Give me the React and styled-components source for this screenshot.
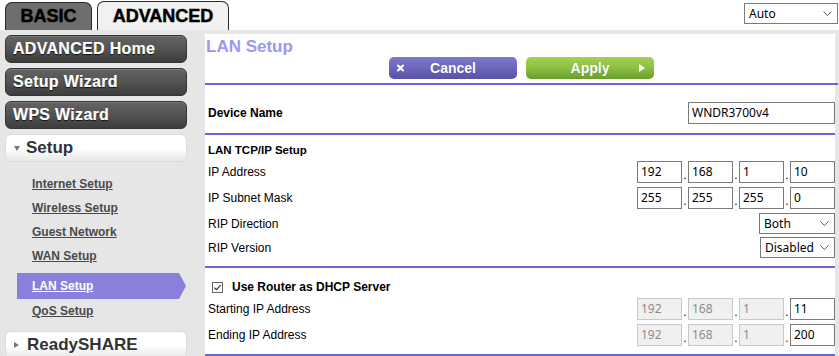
import React from 'react';
import styled, { createGlobalStyle } from 'styled-components';

const GlobalStyle = createGlobalStyle`
  html, body {
    margin: 0;
    padding: 0;
    background: #ffffff;
  }
  body {
    width: 839px;
    height: 356px;
    overflow: hidden;
    font-family: "Liberation Sans", Arial, sans-serif;
  }
`;

const fieldFont = `"Noto Sans", "Liberation Sans", Arial, sans-serif`;

const Page = styled.div`
  display: flex;
  flex-direction: column;
  width: 839px;
  height: 356px;
`;

const Header = styled.div`
  height: 30px;
  flex-shrink: 0;
  display: flex;
  justify-content: space-between;
  padding-left: 5px;
  box-sizing: border-box;
`;

const Tabs = styled.div`
  display: flex;
  align-items: flex-end;
  gap: 5px;
`;

const Tab = styled.div`
  box-sizing: border-box;
  width: ${(p) => p.$width}px;
  height: ${(p) => (p.$active ? 29 : 28)}px;
  display: flex;
  align-items: center;
  justify-content: center;
  border: 1px solid #2a2a2a;
  border-bottom: none;
  border-radius: 7px 7px 0 0;
  background: ${(p) => (p.$active ? '#f1f1f1' : '#6e6e6e')};
  color: #000;
  font-size: 18px;
  font-weight: bold;
  -webkit-text-stroke: 0.5px #000;
`;

const SelectBox = styled.div`
  box-sizing: border-box;
  width: ${(p) => p.$width}px;
  height: 21px;
  display: flex;
  align-items: center;
  justify-content: space-between;
  padding: 0 5px 0 4px;
  border: 1px solid #7a7a7a;
  background: #fff;
  font-family: ${fieldFont};
  font-size: 12px;
  color: #000;
  margin-top: ${(p) => p.$top || 0}px;
  margin-right: ${(p) => p.$right || 0}px;
`;

const Main = styled.div`
  flex: 1;
  display: flex;
  align-items: flex-start;
  background: #e6e6e6;
`;

const Sidebar = styled.div`
  width: 205px;
  flex-shrink: 0;
  box-sizing: border-box;
  padding: 5px 0 0 5px;
  display: flex;
  flex-direction: column;
`;

const NavButton = styled.div`
  box-sizing: border-box;
  width: 182px;
  height: 28px;
  margin-bottom: 5px;
  padding-left: 7px;
  display: flex;
  align-items: center;
  border-radius: 6px;
  border: 1px solid #353535;
  background: linear-gradient(#636363 0%, #555 45%, #3d3d3d 100%);
  box-shadow: inset 0 1px 0 #7a7a7a;
  color: #fff;
  font-size: 16px;
  font-weight: bold;
  letter-spacing: 0.3px;
  -webkit-text-stroke: 0.2px #fff;
  text-shadow: 0 1px 1px #111;
`;

const SectionButton = styled.div`
  box-sizing: border-box;
  width: 182px;
  height: 28px;
  margin-top: ${(p) => p.$top || 0}px;
  padding-left: 8px;
  display: flex;
  align-items: center;
  gap: 6px;
  border-radius: 6px;
  border: 1px solid #dcdcdc;
  background: linear-gradient(#ffffff 0%, #ffffff 50%, #e8e8e8 100%);
  color: #333;
  font-size: 17px;
  font-weight: bold;
`;

const Caret = styled.span`
  width: 0;
  height: 0;
  ${(p) =>
    p.$open
      ? `border-left: 3.5px solid transparent;
         border-right: 3.5px solid transparent;
         border-top: 5px solid #777;`
      : `border-top: 3.5px solid transparent;
         border-bottom: 3.5px solid transparent;
         border-left: 5px solid #777;
         margin-right: 2px;`}
`;

const SubMenu = styled.div`
  display: flex;
  flex-direction: column;
  padding-top: 10px;
`;

const SubLink = styled.a`
  display: block;
  height: 24px;
  line-height: 24px;
  padding-left: 27px;
  color: #4a4a4a;
  font-size: 12px;
  font-weight: bold;
  text-decoration: underline;
`;

const ActiveLink = styled.a`
  display: block;
  box-sizing: border-box;
  width: 169px;
  height: 26px;
  line-height: 26px;
  margin: 5px 0 0 12px;
  padding-left: 15px;
  background: #8880da;
  clip-path: polygon(0 0, calc(100% - 7px) 0, 100% 50%, calc(100% - 7px) 100%, 0 100%);
  color: #fff;
  font-size: 12px;
  font-weight: bold;
  text-decoration: underline;
`;

const Panel = styled.div`
  width: 630px;
  flex-shrink: 0;
  margin-top: 4px;
  background: #fff;
  display: flex;
  flex-direction: column;

  & > * {
    flex-shrink: 0;
  }
`;

const Title = styled.div`
  height: 21px;
  line-height: 21px;
  padding: 2px 0 0 1px;
  color: #9d97f3;
  font-size: 17px;
  font-weight: bold;
`;

const ButtonRow = styled.div`
  display: flex;
  justify-content: center;
  gap: 9px;
  padding-left: 3px;
`;

const ActionButton = styled.div`
  position: relative;
  box-sizing: border-box;
  width: 128px;
  height: 22px;
  display: flex;
  align-items: center;
  justify-content: center;
  border-radius: 5px;
  background: ${(p) =>
    p.$kind === 'apply'
      ? 'linear-gradient(#a2d251 0%, #8cbf41 50%, #6b9d30 100%)'
      : 'linear-gradient(#7f78cf 0%, #6d66bd 50%, #5a52a4 100%)'};
  color: #fff;
  font-size: 14px;
  font-weight: bold;
  text-shadow: 0 0 1px rgba(0, 0, 0, 0.25);
`;

const ButtonIcon = styled.svg`
  position: absolute;
  top: 50%;
  transform: translateY(-50%);
  ${(p) => (p.$side === 'left' ? 'left: 8px;' : 'right: 9px;')}
`;

const Divider = styled.div`
  height: 2px;
  background: #6c65d9;
  margin-top: ${(p) => p.$top || 0}px;
  margin-right: ${(p) => p.$extend || 0}px;
`;

const Row = styled.div`
  height: ${(p) => p.$h}px;
  padding-top: ${(p) => p.$pt || 0}px;
  display: flex;
  justify-content: space-between;
  align-items: flex-start;
`;

const Label = styled.div`
  padding-left: 3px;
  line-height: 22px;
  height: 22px;
  font-size: ${(p) => (p.$size ? p.$size : 12)}px;
  font-weight: ${(p) => (p.$bold ? 'bold' : 'normal')};
  color: #000;
`;

const TextField = styled.div`
  box-sizing: border-box;
  width: ${(p) => p.$width}px;
  height: 22px;
  line-height: 20px;
  padding-left: 3px;
  border: 1px solid ${(p) => (p.$disabled ? '#c9c9c9' : '#7a7a7a')};
  background: ${(p) => (p.$disabled ? '#f0f0f0' : '#fff')};
  color: ${(p) => (p.$disabled ? '#8c8c8c' : '#000')};
  font-family: ${fieldFont};
  font-size: 12px;
`;

const IpGroup = styled.div`
  display: flex;
  align-items: flex-end;
`;

const Dot = styled.span`
  width: 6px;
  text-align: center;
  font-size: 12px;
  line-height: 12px;
  padding-bottom: 2px;
  color: #000;
`;

const CheckRow = styled.div`
  height: 22px;
  padding: 8px 0 0 7px;
  display: flex;
  align-items: center;
  gap: 9px;
  font-size: 12px;
  font-weight: bold;
  color: #000;
`;

const Chevron = () => (
  <svg width="9" height="5" viewBox="0 0 9 5">
    <path d="M0.5 0.5 L4.5 4.5 L8.5 0.5" fill="none" stroke="#555" strokeWidth="1" />
  </svg>
);

const Select = ({ value, width, top, right }) => (
  <SelectBox $width={width} $top={top} $right={right}>
    <span>{value}</span>
    <Chevron />
  </SelectBox>
);

const IpField = ({ parts, disabledParts = 0 }) => (
  <IpGroup>
    {parts.map((p, i) => (
      <React.Fragment key={i}>
        {i > 0 && <Dot>.</Dot>}
        <TextField $width={45} $disabled={i < disabledParts}>
          {p}
        </TextField>
      </React.Fragment>
    ))}
  </IpGroup>
);

const subLinks = ['Internet Setup', 'Wireless Setup', 'Guest Network', 'WAN Setup'];

const App = () => {
  return (
    <Page>
      <GlobalStyle />
      <Header>
        <Tabs>
          <Tab $width={87}>BASIC</Tab>
          <Tab $width={132} $active>
            ADVANCED
          </Tab>
        </Tabs>
        <Select value="Auto" width={94} top={3} right={1} />
      </Header>
      <Main>
        <Sidebar>
          <NavButton>ADVANCED Home</NavButton>
          <NavButton>Setup Wizard</NavButton>
          <NavButton>WPS Wizard</NavButton>
          <SectionButton>
            <Caret $open />
            Setup
          </SectionButton>
          <SubMenu>
            {subLinks.map((l) => (
              <SubLink key={l}>{l}</SubLink>
            ))}
            <ActiveLink>LAN Setup</ActiveLink>
            <SubLink>QoS Setup</SubLink>
          </SubMenu>
          <SectionButton $top={8}>
            <Caret />
            ReadySHARE
          </SectionButton>
        </Sidebar>
        <Panel>
          <Title>LAN Setup</Title>
          <ButtonRow>
            <ActionButton>
              <ButtonIcon $side="left" width="7" height="7" viewBox="0 0 7 7">
                <path d="M1 1 L6 6 M6 1 L1 6" stroke="#fff" strokeWidth="2" strokeLinecap="square" />
              </ButtonIcon>
              Cancel
            </ActionButton>
            <ActionButton $kind="apply">
              Apply
              <ButtonIcon $side="right" width="6" height="8" viewBox="0 0 6 8">
                <path d="M0 0 L6 4 L0 8 Z" fill="#fff" />
              </ButtonIcon>
            </ActionButton>
          </ButtonRow>
          <Divider $top={4} $extend={-3} />
          <Row $pt={17} $h={31}>
            <Label $bold>Device Name</Label>
            <TextField $width={147}>WNDR3700v4</TextField>
          </Row>
          <Divider />
          <Row $pt={4} $h={22}>
            <Label $bold $size={11.5}>
              LAN TCP/IP Setup
            </Label>
          </Row>
          <Row $h={26}>
            <Label>IP Address</Label>
            <IpField parts={['192', '168', '1', '10']} />
          </Row>
          <Row $h={26}>
            <Label>IP Subnet Mask</Label>
            <IpField parts={['255', '255', '255', '0']} />
          </Row>
          <Row $h={24}>
            <Label>RIP Direction</Label>
            <Select value="Both" width={76} />
          </Row>
          <Row $h={29}>
            <Label>RIP Version</Label>
            <Select value="Disabled" width={75} />
          </Row>
          <Divider />
          <CheckRow>
            <svg width="11" height="11" viewBox="0 0 11 11">
              <rect x="0.5" y="0.5" width="10" height="10" fill="#fff" stroke="#666" />
              <path d="M2.3 5.6 L4.4 7.7 L8.7 3.2" fill="none" stroke="#333" strokeWidth="1.1" />
            </svg>
            Use Router as DHCP Server
          </CheckRow>
          <Row $h={26}>
            <Label>Starting IP Address</Label>
            <IpField parts={['192', '168', '1', '11']} disabledParts={3} />
          </Row>
          <Row $h={30}>
            <Label>Ending IP Address</Label>
            <IpField parts={['192', '168', '1', '200']} disabledParts={3} />
          </Row>
          <Divider />
        </Panel>
      </Main>
    </Page>
  );
};

export default App;
